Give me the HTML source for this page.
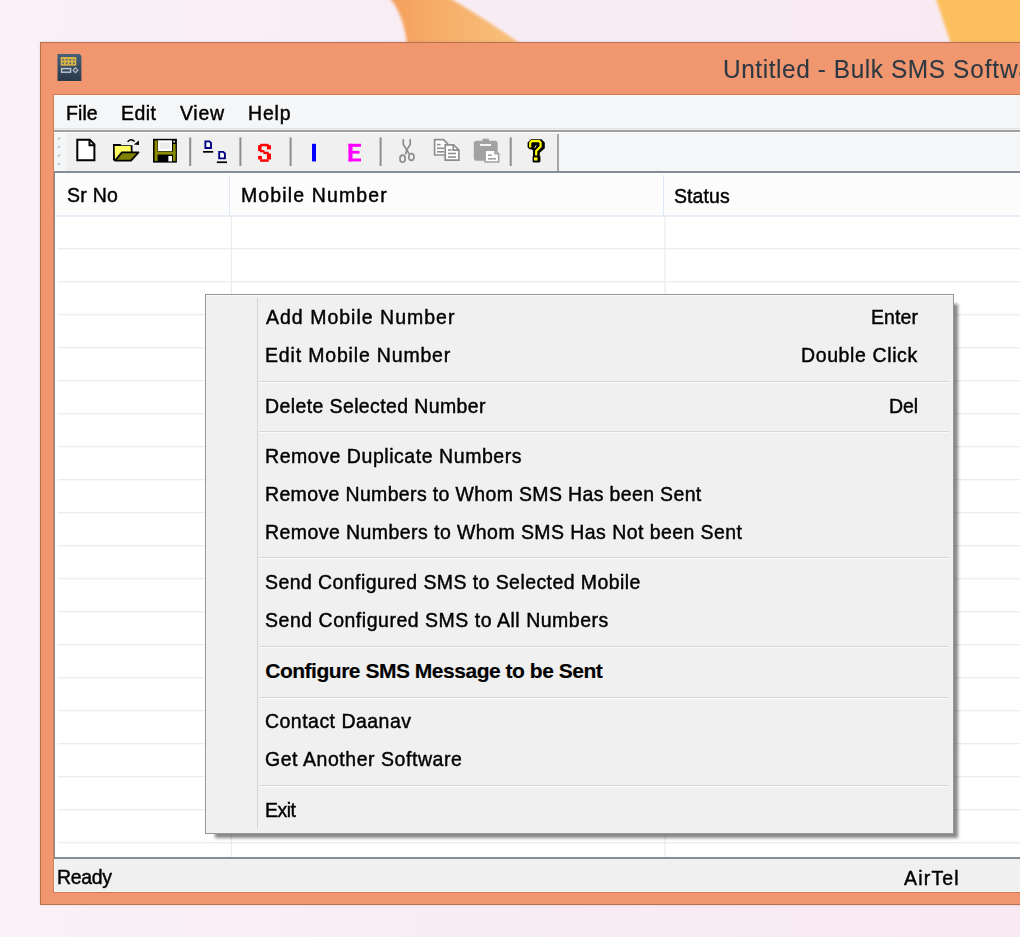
<!DOCTYPE html>
<html><head><meta charset="utf-8">
<style>
*{box-sizing:border-box;margin:0;padding:0}
html,body{width:1020px;height:937px;overflow:hidden}
body{position:relative;background:linear-gradient(90deg,#faf2f7 0%,#f8edf4 40%,#f9e9f2 100%);font-family:"Liberation Sans",sans-serif;color:#000}
.a{position:absolute}
.t{position:absolute;white-space:nowrap;transform-origin:0 0}
</style></head><body>
<!-- background blobs -->
<svg class="a" style="left:0;top:0" width="1020" height="60">
<defs>
<linearGradient id="bg1" x1="0" y1="0" x2="1" y2="0"><stop offset="0" stop-color="#f4a05c"/><stop offset="1" stop-color="#f8c27c"/></linearGradient>
<filter id="bl" x="-20%" y="-20%" width="140%" height="140%"><feGaussianBlur stdDeviation="1.4"/></filter>
</defs>
<path d="M388 -4 L446 -4 Q484 18 521 44 L407 44 Q403 12 388 -4Z" fill="url(#bg1)" filter="url(#bl)"/>
<path d="M935 -4 L1030 -4 L1030 44 L951 44 Z" fill="#fbbf5f" filter="url(#bl)"/>
</svg>
<!-- window frame -->
<div class="a" style="left:40px;top:42px;width:1000px;height:863px;background:#f0976f;border:1px solid #b9704d;box-shadow:0 0 3px rgba(80,40,80,0.12)"></div>
<!-- title icon -->
<svg class="a" style="left:0;top:0" width="100" height="100">
<defs><linearGradient id="ic" x1="0" y1="0" x2="0" y2="1"><stop offset="0" stop-color="#44607c"/><stop offset="1" stop-color="#2a394a"/></linearGradient></defs>
<path d="M57.5 54 H79.5 L81.4 56 V81.1 H57.5 Z" fill="url(#ic)"/>
<rect x="60.7" y="57" width="15.6" height="8.7" fill="#d9b446"/>
<g fill="#5a6a78">
<circle cx="63.2" cy="59.8" r="1"/><circle cx="66.75" cy="59.8" r="1"/><circle cx="70.3" cy="59.8" r="1"/><circle cx="73.8" cy="59.8" r="1"/>
<circle cx="63.2" cy="63.2" r="1"/><circle cx="66.75" cy="63.2" r="1"/><circle cx="70.3" cy="63.2" r="1"/><circle cx="73.8" cy="63.2" r="1"/>
</g>
<rect x="61.6" y="68.6" width="9" height="3.6" fill="none" stroke="#c4c8ce" stroke-width="1.4"/>
<path d="M75.5 67.8 L77.9 70.2 L75.5 72.6 L73.1 70.2 Z" fill="none" stroke="#b8bec6" stroke-width="1.2"/>
</svg>
<!-- client area -->
<div class="a" style="left:53px;top:94px;width:1000px;height:799px;background:#f0f0f0;border-left:1px solid #d27c57;border-top:1px solid #d27c57;border-bottom:1px solid #d27c57"></div>
<div class="a" style="left:54px;top:891px;width:1000px;height:1px;background:#f8f8f8"></div>
<!-- menubar -->
<div class="a" style="left:54px;top:95px;width:1000px;height:34px;background:#f5f6f7"></div>
<div class="a" style="left:54px;top:128px;width:1000px;height:1px;background:#e2e3e4"></div>
<div class="a" style="left:54px;top:130px;width:1000px;height:2px;background:#a0a0a0"></div>
<!-- toolbar -->
<div class="a" style="left:54px;top:132px;width:1000px;height:40px;background:#f5f6f7;border-top:1px solid #fff"></div>
<div class="a" style="left:66px;top:133px;width:492px;height:39px;background:#f0f0f0"></div>
<div class="a" style="left:557px;top:134px;width:2px;height:38px;background:#a8a8a8"></div>
<div class="a" style="left:54px;top:171px;width:1000px;height:2px;background:#858c96"></div>
<svg class="a" style="left:0;top:0" width="600" height="180">
<defs><pattern id="chk" x="0" y="0" width="2.8" height="2.8" patternUnits="userSpaceOnUse"><rect width="2.8" height="2.8" fill="#ffff00"/><rect x="1.4" y="1.4" width="1.4" height="1.4" fill="#ffffc8"/><rect x="0" y="0" width="1.4" height="1.4" fill="#ffffc8"/></pattern></defs>
<!-- gripper -->
<g stroke="#b4b4b4" stroke-width="1.3"><path d="M58 139.5 L60 137.5"/><path d="M58 148 L60 146"/><path d="M58 156.5 L60 154.5"/><path d="M58 165 L60 163"/></g>
<!-- separators -->
<g fill="#8e8e8e"><rect x="189.2" y="137.4" width="2" height="28.6"/><rect x="239.4" y="137.4" width="2" height="28.6"/><rect x="289.6" y="137.4" width="2" height="28.6"/><rect x="379.6" y="137.4" width="2" height="28.6"/><rect x="509.7" y="137.4" width="2" height="28.6"/></g>
<!-- new -->
<path d="M77.3 139.8 H89.8 L94.4 144.4 V160.2 H77.3 Z" fill="#fff" stroke="#000" stroke-width="2"/>
<path d="M89.5 140 V145.2 H94.4" fill="none" stroke="#000" stroke-width="2"/>
<!-- open -->
<path d="M114 160.6 V145 H120 L121 146.2 H131.5 V152" fill="#ffff00" stroke="#000" stroke-width="2"/>
<path d="M114.6 146 H130.6 V152.5 H121.5 L115 159.5 Z" fill="url(#chk)"/>
<path d="M122 152.4 H138.5 L131 160.6 H115 Z" fill="#808000" stroke="#000" stroke-width="1.8" stroke-linejoin="round"/>
<path d="M127.6 141.8 Q131 137.8 134.6 141.5" fill="none" stroke="#000" stroke-width="1.5"/>
<path d="M133.8 144.6 L139 140.4 L139 145 Z" fill="#000"/>
<!-- save -->
<rect x="153" y="138.8" width="23.9" height="23.8" fill="#000"/>
<rect x="154.6" y="140.5" width="3" height="20.5" fill="#8c8c00"/>
<rect x="173" y="144" width="2.6" height="17" fill="#8c8c00"/>
<rect x="156" y="151.6" width="19.5" height="3" fill="#8c8c00"/>
<rect x="158" y="140.3" width="14" height="10.8" fill="#fff"/>
<rect x="160.2" y="142.6" width="9.6" height="6.4" fill="#ececec"/>
<rect x="168.4" y="156" width="3.6" height="5.4" fill="#fff"/>
<rect x="173.4" y="140.8" width="1.6" height="1.6" fill="#fff"/>
<!-- cascade -->
<path d="M205.4 141.4 H209.4 L211 143 V148 H205.4 Z" fill="#fff" stroke="#000080" stroke-width="1.9"/>
<rect x="203" y="151" width="10.2" height="1.7" fill="#000"/>
<path d="M219.2 151.9 H223.2 L224.9 153.5 V158.4 H219.2 Z" fill="#fff" stroke="#000080" stroke-width="1.9"/>
<rect x="216.8" y="161.4" width="10.2" height="1.7" fill="#000"/>
<!-- S -->
<g fill="#ff0000">
<rect x="260.1" y="143.8" width="8.6" height="2.5"/><rect x="258.1" y="145.2" width="3.5" height="6"/><rect x="266.9" y="145.2" width="4.1" height="4.2"/>
<rect x="260" y="150" width="4.5" height="2.3"/><rect x="263.4" y="151.7" width="5.3" height="2.4"/><rect x="266.9" y="153.5" width="4.1" height="6"/>
<rect x="258.1" y="155.9" width="3.8" height="3.6"/><rect x="260.1" y="159.3" width="8.6" height="2.5"/>
</g>
<!-- I -->
<rect x="312" y="143.8" width="4" height="17.6" fill="#0000ff"/>
<!-- E -->
<g fill="#ff00ff"><rect x="348.5" y="143.8" width="4" height="17.6"/><rect x="348.5" y="143.8" width="12.5" height="3"/><rect x="348.5" y="150.9" width="11" height="2.7"/><rect x="348.5" y="158.5" width="12.5" height="2.9"/></g>
<!-- scissors -->
<g fill="none" stroke="#8e8e8e" stroke-width="1.7">
<path d="M403.3 139 V144.5 L406.8 150 L410.2 144.5 V139"/>
<path d="M406.8 150 L405.4 154.5"/><path d="M406.8 150 L409 153.6"/>
<ellipse cx="402.6" cy="158.7" rx="2.6" ry="3.5"/><ellipse cx="411.4" cy="157" rx="2.6" ry="3.3"/>
</g>
<!-- copy -->
<g stroke="#8e8e8e" stroke-width="1.7" fill="#fff">
<path d="M434.6 139.6 H443.5 L447.5 143.6 V155 H434.6 Z"/>
<path d="M445.2 144.8 H453.6 L458.9 150 V160.2 H445.2 Z"/>
<path d="M453.2 144.8 V150.2 H458.9" fill="none"/>
</g>
<g fill="#8e8e8e"><rect x="437" y="143.8" width="3.6" height="1.6"/><rect x="437" y="147.5" width="7" height="1.6"/><rect x="437" y="151" width="7" height="1.6"/>
<rect x="448" y="149.2" width="3.6" height="1.6"/><rect x="448" y="152.7" width="8" height="1.6"/><rect x="448" y="156.2" width="8" height="1.6"/></g>
<!-- paste -->
<path d="M475.5 140.7 H496 L497.7 142.5 V159 L496 160.7 H475.5 L473.8 159 V142.5 Z" fill="#a2a2a2"/>
<rect x="482.5" y="138.7" width="6.5" height="2.5" fill="#a2a2a2"/>
<rect x="480" y="144" width="11" height="2" fill="#f4f4f4"/>
<path d="M485.1 150.1 H495 L498.7 153.8 V162 H485.1 Z" fill="#fff" stroke="#a2a2a2" stroke-width="1.6"/>
<path d="M495 150.1 V153.8 H498.7" fill="none" stroke="#a2a2a2" stroke-width="1.6"/>
<rect x="488" y="154.5" width="4" height="1.5" fill="#a2a2a2"/><rect x="488" y="158" width="8" height="1.6" fill="#a2a2a2"/>
<!-- help -->
<path d="M528.6 141.5 L531 139.2 H541.4 L544.8 142.6 V148.2 L539.8 152.8 V156.2 H540.4 V161.4 L539.2 162.6 H538 V162.6 H533.4 L532.6 161.8 V156 H533 V150.5 L531.5 149.2 H529.5 L527.6 147.3 V142.5 Z" fill="#000"/>
<g fill="none" stroke-linejoin="miter" stroke-linecap="butt">
<path d="M530.2 147.6 V142.6 L531.6 141.2 H539.2 L540.6 142.6 V146.6 L536.2 151 V155.6" stroke="#ffff00" stroke-width="2.2"/>
</g>
<rect x="534" y="157.4" width="3.5" height="3.1" fill="#ffff00"/>
<path d="M534.6 148 L536.4 145" stroke="#fff" stroke-width="1" opacity="0.8"/>
</svg>
<!-- list -->
<div class="a" style="left:54px;top:173px;width:1000px;height:685px;background:#fff;border-left:1px solid #858c96"></div>
<div class="a" style="left:55px;top:173px;width:1000px;height:43px;background:#fcfcfc"></div>
<svg class="a" style="left:0;top:0" width="1020" height="230"><rect x="55" y="215.3" width="970" height="1.4" fill="#dfe9f5"/></svg>
<div class="a" style="left:229px;top:175px;width:1px;height:41px;background:#dde8f4"></div>
<div class="a" style="left:663px;top:175px;width:1px;height:41px;background:#dde8f4"></div>
<svg class="a" style="left:0;top:0" width="1020" height="860">
<rect x="57.5" y="248.10" width="970" height="1.2" fill="#ececec"/>
<rect x="57.5" y="281.10" width="970" height="1.2" fill="#ececec"/>
<rect x="57.5" y="314.10" width="970" height="1.2" fill="#ececec"/>
<rect x="57.5" y="347.10" width="970" height="1.2" fill="#ececec"/>
<rect x="57.5" y="380.10" width="970" height="1.2" fill="#ececec"/>
<rect x="57.5" y="413.10" width="970" height="1.2" fill="#ececec"/>
<rect x="57.5" y="446.10" width="970" height="1.2" fill="#ececec"/>
<rect x="57.5" y="479.10" width="970" height="1.2" fill="#ececec"/>
<rect x="57.5" y="512.10" width="970" height="1.2" fill="#ececec"/>
<rect x="57.5" y="545.10" width="970" height="1.2" fill="#ececec"/>
<rect x="57.5" y="578.10" width="970" height="1.2" fill="#ececec"/>
<rect x="57.5" y="611.10" width="970" height="1.2" fill="#ececec"/>
<rect x="57.5" y="644.10" width="970" height="1.2" fill="#ececec"/>
<rect x="57.5" y="677.10" width="970" height="1.2" fill="#ececec"/>
<rect x="57.5" y="710.10" width="970" height="1.2" fill="#ececec"/>
<rect x="57.5" y="743.10" width="970" height="1.2" fill="#ececec"/>
<rect x="57.5" y="776.10" width="970" height="1.2" fill="#ececec"/>
<rect x="57.5" y="809.10" width="970" height="1.2" fill="#ececec"/>
<rect x="57.5" y="842.10" width="970" height="1.2" fill="#ececec"/>
<rect x="230.8" y="216" width="1.2" height="642" fill="#ececec"/>
<rect x="664.5" y="216" width="1.2" height="642" fill="#ececec"/>
</svg>
<!-- status bar -->
<div class="a" style="left:54px;top:857px;width:1000px;height:2px;background:#858c96"></div>
<div class="a" style="left:54px;top:859px;width:1px;height:32px;background:#fafafa"></div>
<!-- context menu -->
<div class="a" style="left:205px;top:294px;width:749px;height:540px;background:#f0f0f0;border:1px solid #979797;box-shadow:7px 7px 3px -3px rgba(0,0,0,0.47)"></div>
<div class="a" style="left:206px;top:295px;width:747px;height:1px;background:#f9f9f9"></div>
<div class="a" style="left:257px;top:298px;width:1px;height:531px;background:#d5d5d5"></div>
<div class="a" style="left:259px;top:381px;width:690px;height:1px;background:#d7d7d7"></div>
<div class="a" style="left:259px;top:382px;width:690px;height:1px;background:#fafafa"></div>
<div class="a" style="left:259px;top:431px;width:690px;height:1px;background:#d7d7d7"></div>
<div class="a" style="left:259px;top:432px;width:690px;height:1px;background:#fafafa"></div>
<div class="a" style="left:259px;top:557px;width:690px;height:1px;background:#d7d7d7"></div>
<div class="a" style="left:259px;top:558px;width:690px;height:1px;background:#fafafa"></div>
<div class="a" style="left:259px;top:646px;width:690px;height:1px;background:#d7d7d7"></div>
<div class="a" style="left:259px;top:647px;width:690px;height:1px;background:#fafafa"></div>
<div class="a" style="left:259px;top:697px;width:690px;height:1px;background:#d7d7d7"></div>
<div class="a" style="left:259px;top:698px;width:690px;height:1px;background:#fafafa"></div>
<div class="a" style="left:259px;top:785px;width:690px;height:1px;background:#d7d7d7"></div>
<div class="a" style="left:259px;top:786px;width:690px;height:1px;background:#fafafa"></div>
<div class="t" style="left:723.36px;top:55.77px;font-size:26.5px;line-height:26.5px;font-weight:400;color:#2c3842;letter-spacing:0.644px;transform:scaleX(0.9200);-webkit-text-stroke:0.1px #2c3842">Untitled - Bulk SMS</div>
<div class="t" style="left:953.18px;top:55.77px;font-size:26.5px;line-height:26.5px;font-weight:400;color:#2c3842;letter-spacing:1.000px;transform:scaleX(0.9200);-webkit-text-stroke:0.1px #2c3842">Softwa</div>
<div class="t" style="left:65.85px;top:102.65px;font-size:20.5px;line-height:20.5px;font-weight:400;color:#000;letter-spacing:0.105px;transform:scaleX(0.9500);-webkit-text-stroke:0.45px #000">File</div>
<div class="t" style="left:120.55px;top:102.65px;font-size:20.5px;line-height:20.5px;font-weight:400;color:#000;letter-spacing:0.439px;transform:scaleX(0.9500);-webkit-text-stroke:0.45px #000">Edit</div>
<div class="t" style="left:180.00px;top:102.65px;font-size:20.5px;line-height:20.5px;font-weight:400;color:#000;letter-spacing:0.772px;transform:scaleX(0.9500);-webkit-text-stroke:0.45px #000">View</div>
<div class="t" style="left:247.55px;top:102.65px;font-size:20.5px;line-height:20.5px;font-weight:400;color:#000;letter-spacing:0.895px;transform:scaleX(0.9500);-webkit-text-stroke:0.45px #000">Help</div>
<div class="t" style="left:67.05px;top:185.35px;font-size:20.5px;line-height:20.5px;font-weight:400;color:#000;letter-spacing:0.276px;transform:scaleX(0.9500);-webkit-text-stroke:0.45px #000">Sr No</div>
<div class="t" style="left:240.85px;top:185.35px;font-size:20.5px;line-height:20.5px;font-weight:400;color:#000;letter-spacing:1.193px;transform:scaleX(0.9500);-webkit-text-stroke:0.45px #000">Mobile Number</div>
<div class="t" style="left:674.45px;top:185.55px;font-size:20.5px;line-height:20.5px;font-weight:400;color:#000;letter-spacing:0.095px;transform:scaleX(0.9500);-webkit-text-stroke:0.45px #000">Status</div>
<div class="t" style="left:57.35px;top:867.35px;font-size:20.5px;line-height:20.5px;font-weight:400;color:#000;letter-spacing:-0.355px;transform:scaleX(0.9500);-webkit-text-stroke:0.45px #000">Ready</div>
<div class="t" style="left:903.70px;top:867.65px;font-size:20.5px;line-height:20.5px;font-weight:400;color:#000;letter-spacing:1.263px;transform:scaleX(0.9500);-webkit-text-stroke:0.45px #000">AirTel</div>
<div class="t" style="left:265.80px;top:306.85px;font-size:20.5px;line-height:20.5px;font-weight:400;color:#000;letter-spacing:1.076px;transform:scaleX(0.9500);-webkit-text-stroke:0.45px #000">Add Mobile Number</div>
<div class="t" style="left:265.25px;top:344.85px;font-size:20.5px;line-height:20.5px;font-weight:400;color:#000;letter-spacing:0.882px;transform:scaleX(0.9500);-webkit-text-stroke:0.45px #000">Edit Mobile Number</div>
<div class="t" style="left:265.25px;top:395.75px;font-size:20.5px;line-height:20.5px;font-weight:400;color:#000;letter-spacing:0.421px;transform:scaleX(0.9500);-webkit-text-stroke:0.45px #000">Delete Selected Number</div>
<div class="t" style="left:265.25px;top:445.65px;font-size:20.5px;line-height:20.5px;font-weight:400;color:#000;letter-spacing:0.593px;transform:scaleX(0.9500);-webkit-text-stroke:0.45px #000">Remove Duplicate Numbers</div>
<div class="t" style="left:265.25px;top:483.75px;font-size:20.5px;line-height:20.5px;font-weight:400;color:#000;letter-spacing:0.381px;transform:scaleX(0.9500);-webkit-text-stroke:0.45px #000">Remove Numbers to Whom SMS Has been Sent</div>
<div class="t" style="left:265.25px;top:521.95px;font-size:20.5px;line-height:20.5px;font-weight:400;color:#000;letter-spacing:0.469px;transform:scaleX(0.9500);-webkit-text-stroke:0.45px #000">Remove Numbers to Whom SMS Has Not been Sent</div>
<div class="t" style="left:265.25px;top:571.95px;font-size:20.5px;line-height:20.5px;font-weight:400;color:#000;letter-spacing:0.451px;transform:scaleX(0.9500);-webkit-text-stroke:0.45px #000">Send Configured SMS to Selected Mobile</div>
<div class="t" style="left:265.25px;top:610.15px;font-size:20.5px;line-height:20.5px;font-weight:400;color:#000;letter-spacing:0.558px;transform:scaleX(0.9500);-webkit-text-stroke:0.45px #000">Send Configured SMS to All Numbers</div>
<div class="t" style="left:265.20px;top:660.22px;font-size:21px;line-height:21px;font-weight:700;color:#000;letter-spacing:-0.477px;transform:scaleX(1.0000);-webkit-text-stroke:0.15px #000">Configure SMS Message to be Sent</div>
<div class="t" style="left:265.25px;top:710.95px;font-size:20.5px;line-height:20.5px;font-weight:400;color:#000;letter-spacing:0.510px;transform:scaleX(0.9500);-webkit-text-stroke:0.45px #000">Contact Daanav</div>
<div class="t" style="left:265.25px;top:749.25px;font-size:20.5px;line-height:20.5px;font-weight:400;color:#000;letter-spacing:0.587px;transform:scaleX(0.9500);-webkit-text-stroke:0.45px #000">Get Another Software</div>
<div class="t" style="left:265.25px;top:799.85px;font-size:20.5px;line-height:20.5px;font-weight:400;color:#000;letter-spacing:-0.526px;transform:scaleX(0.9500);-webkit-text-stroke:0.45px #000">Exit</div>
<div class="t" style="left:870.55px;top:306.85px;font-size:20.5px;line-height:20.5px;font-weight:400;color:#000;letter-spacing:0.105px;transform:scaleX(0.9500);-webkit-text-stroke:0.45px #000">Enter</div>
<div class="t" style="left:801.35px;top:344.85px;font-size:20.5px;line-height:20.5px;font-weight:400;color:#000;letter-spacing:0.660px;transform:scaleX(0.9500);-webkit-text-stroke:0.45px #000">Double Click</div>
<div class="t" style="left:888.55px;top:395.75px;font-size:20.5px;line-height:20.5px;font-weight:400;color:#000;letter-spacing:-0.026px;transform:scaleX(0.9500);-webkit-text-stroke:0.45px #000">Del</div>
</body></html>
